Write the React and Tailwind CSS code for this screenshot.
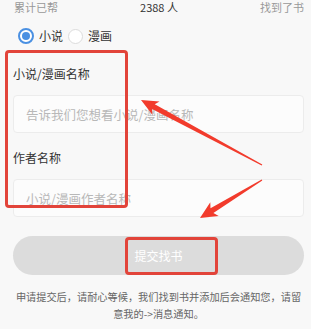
import React from 'react'

const font = "font-['Noto_Sans_CJK_SC','Noto_Sans',sans-serif]"

// Tapered markup arrow: thin tail, thicker neck, triangular head.
function arrowPoints([tx, ty], [hx, hy], headLen, headHalf, neckHalf, tailHalf) {
  const dx = hx - tx
  const dy = hy - ty
  const len = Math.hypot(dx, dy)
  const ux = dx / len
  const uy = dy / len
  const nx = -uy
  const ny = ux
  const bx = hx - ux * headLen
  const by = hy - uy * headLen
  const kx = bx + ux * 3
  const ky = by + uy * 3
  const p = [
    [tx + nx * tailHalf, ty + ny * tailHalf],
    [kx + nx * neckHalf, ky + ny * neckHalf],
    [bx + nx * headHalf, by + ny * headHalf],
    [hx, hy],
    [bx - nx * headHalf, by - ny * headHalf],
    [kx - nx * neckHalf, ky - ny * neckHalf],
    [tx - nx * tailHalf, ty - ny * tailHalf],
  ]
  return p.map(([x, y]) => `${x.toFixed(1)},${y.toFixed(1)}`).join(' ')
}

function Radio({ checked, label }) {
  return (
    <label className="flex items-center gap-[5px]">
      {checked ? (
        <span className="w-[16px] h-[16px] rounded-full border-2 border-[#4a90e2] bg-white flex items-center justify-center">
          <span className="w-[8px] h-[8px] rounded-full bg-[#4a90e2]" />
        </span>
      ) : (
        <span className="w-[15px] h-[15px] rounded-full border border-[#dcdcdc] bg-white" />
      )}
      <span className="text-[12px] leading-[16px] text-[#333]">{label}</span>
    </label>
  )
}

function Field({ label, placeholder, className }) {
  return (
    <div className={className}>
      <div className="text-[12px] leading-[16px] text-[#333]">{label}</div>
      <input
        className="mt-[13px] w-full h-[38px] rounded-[4px] border border-[#ececec] bg-[#fcfcfc] pl-[12px] text-[12.5px] text-[#333] placeholder:text-[#b8b8b8] outline-none"
        placeholder={placeholder}
      />
    </div>
  )
}

export default function App() {
  return (
    <div className={`relative w-full h-[329px] overflow-hidden bg-[#f8f8f8] ${font}`}>
      <div className="pl-[13px] pr-[7px]">
        {/* stats strip, cut off at the top of the shot */}
        <div className="flex justify-between items-center h-[14px] text-[11px] leading-[14px]">
          <span className="text-[#999] pl-[1px]">累计已帮</span>
          <span className="text-[#333]">2388 人</span>
          <span className="text-[#999]">找到了书</span>
        </div>

        <div className="mt-[14px] ml-[5px] flex items-center gap-[5px]">
          <Radio checked label="小说" />
          <Radio label="漫画" />
        </div>

        <Field className="mt-[22px]" label="小说/漫画名称" placeholder="告诉我们您想看小说/漫画名称" />
        <Field className="mt-[17px]" label="作者名称" placeholder="小说/漫画作者名称" />

        <button className="mt-[19px] w-full h-[39px] rounded-full bg-[#dcdcdc] text-white text-[12px]">
          提交找书
        </button>

        <p className="mt-[13px] text-center text-[10.2px] leading-[17px] text-[#666] whitespace-nowrap">
          申请提交后，请耐心等候，我们找到书并添加后会通知您，请留
          <br />
          意我的-&gt;消息通知。
        </p>
      </div>

      {/* annotation overlay */}
      <div className="absolute left-[5px] top-[50px] w-[123px] h-[158px] border-[3px] border-[#e2443a] rounded-[4px] pointer-events-none" />
      <div className="absolute left-[125px] top-[237px] w-[93px] h-[38px] border-[3px] border-[#e2443a] rounded-[4px] pointer-events-none" />
      <svg className="absolute inset-0 pointer-events-none" width="311" height="329" viewBox="0 0 311 329">
        <polygon points={arrowPoints([262, 165], [141, 100], 17, 7.5, 2.8, 0.6)} fill="#f23b2c" />
        <polygon points={arrowPoints([262, 180], [200, 218], 17, 8, 2.8, 0.6)} fill="#f23b2c" />
      </svg>
    </div>
  )
}
